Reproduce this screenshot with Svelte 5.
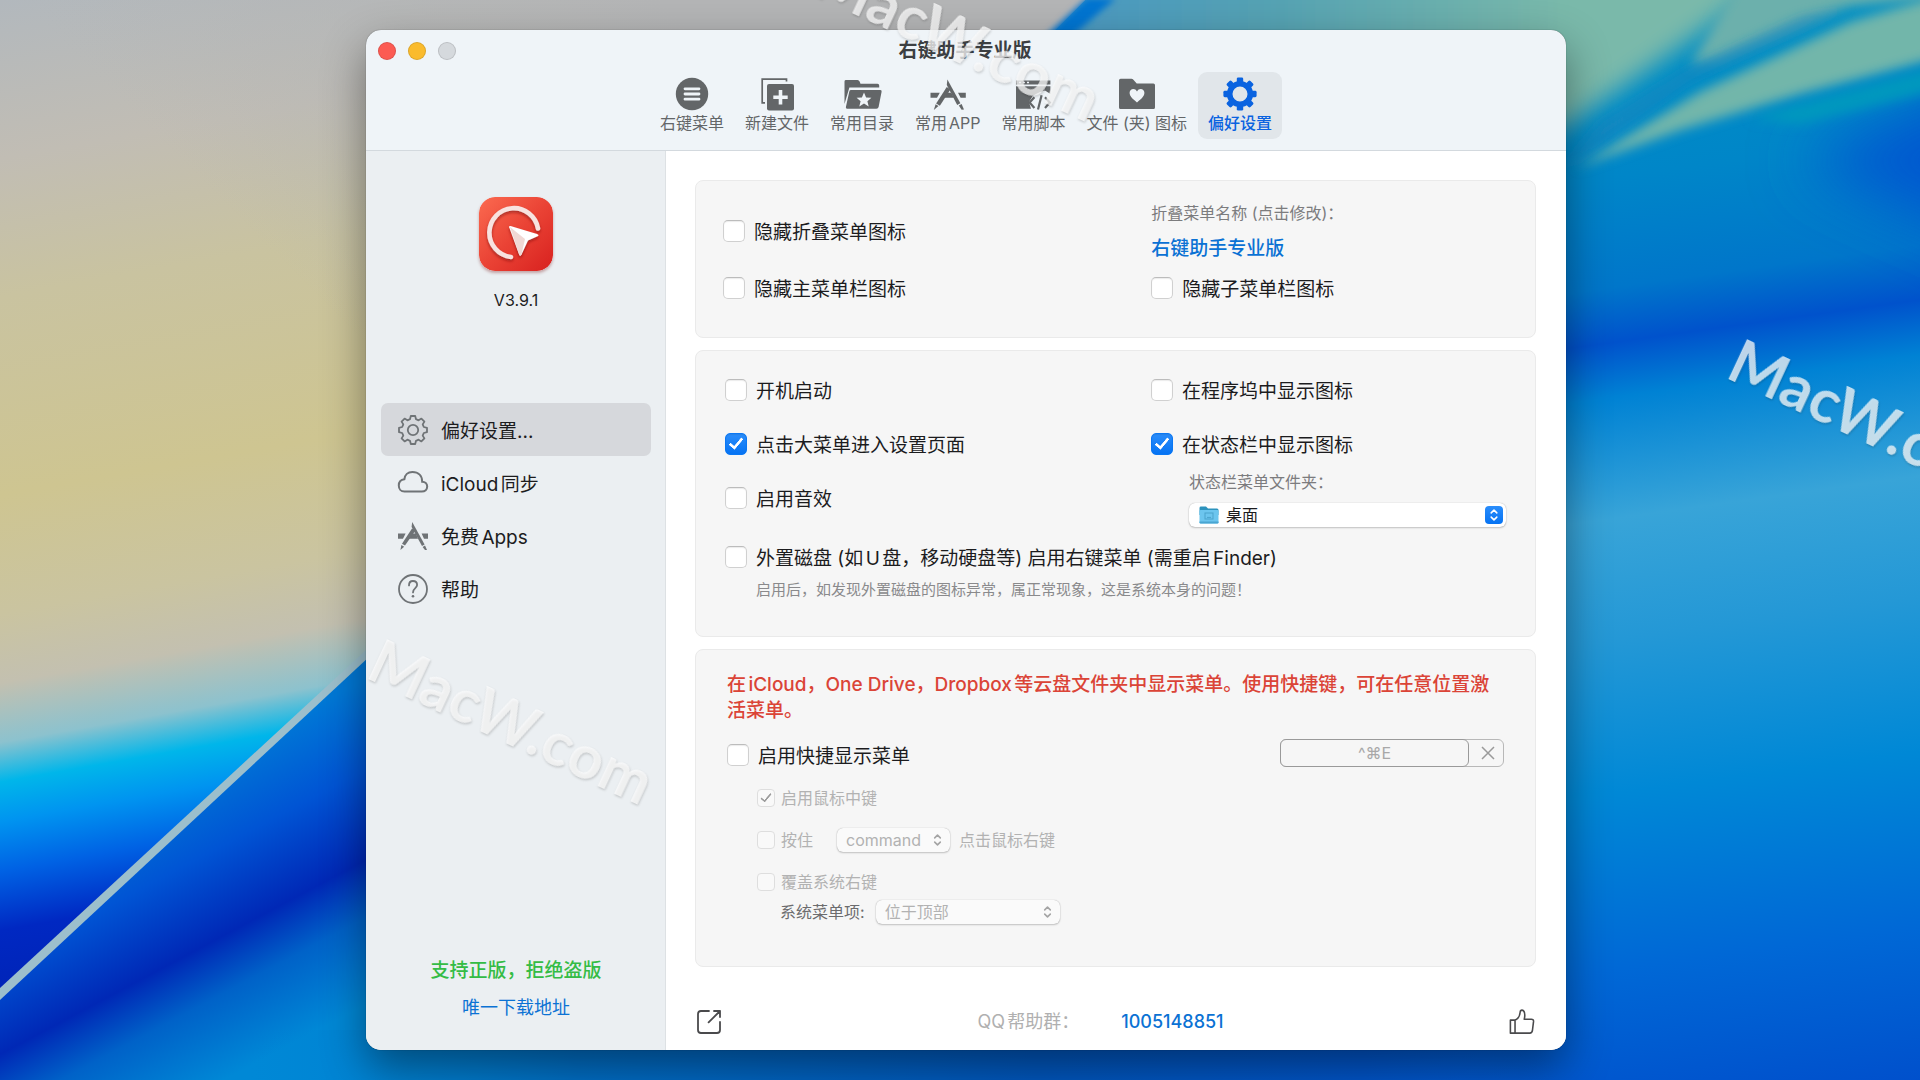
<script lang="ts">
  type Tool = { id: string; label: string };

  const tools: Tool[] = [
    { id: 'menu', label: '右键菜单' },
    { id: 'newfile', label: '新建文件' },
    { id: 'favorites', label: '常用目录' },
    { id: 'apps', label: '常用APP' },
    { id: 'script', label: '常用脚本' },
    { id: 'folder', label: '文件 (夹) 图标' },
    { id: 'gear', label: '偏好设置' }
  ];

  const pages = [
    { id: 'settings', label: '偏好设置...' },
    { id: 'cloud', label: 'iCloud同步' },
    { id: 'free', label: '免费Apps' },
    { id: 'help', label: '帮助' }
  ];

  const teeth = [0, 45, 90, 135, 180, 225, 270, 315];

  let activeTool = $state('gear');
  let activePage = $state('settings');

  let hideFold = $state(false);
  let hideMain = $state(false);
  let hideSub = $state(false);
  let autoStart = $state(false);
  let openSettings = $state(true);
  let sound = $state(false);
  let showDock = $state(false);
  let showStatus = $state(true);
  let external = $state(false);
  let quickMenu = $state(false);
</script>

<svelte:head>
  <title>右键助手专业版</title>
</svelte:head>

{#snippet toolIcon(id: string)}
  <svg class="tool-icon" viewBox="-20 -17 40 34" aria-hidden="true">
    {#if id === 'menu'}
      <circle r="16.2" fill="currentColor" />
      <path d="M-7-5.2H7M-7 0H7M-7 5.2H7" stroke="#eff4f8" stroke-width="2.8" stroke-linecap="round" />
    {:else if id === 'newfile'}
      <path d="M9.5-12.5V-14.8H-14.8V8.8H-12" fill="none" stroke="currentColor" stroke-width="1.7" />
      <rect x="-10" y="-10" width="27" height="26.4" rx="2" fill="currentColor" />
      <path d="M3.5-4V10.4M-3.7 3.2H10.7" stroke="#eff4f8" stroke-width="3.6" />
    {:else if id === 'favorites'}
      <path d="M-17.5-12.6Q-17.5-14-16-14H-4.5Q-3-14-2.4-12.5L-1.5-10.3H15.5Q17.2-10.3 17.2-8.6V-6.4H-12.6L-17.5 10Z" fill="currentColor" />
      <path d="M-11-4H18.4Q20-4 19.6-2.3L16.6 13Q16.2 14.8 14.4 14.8H-14.8Q-16.6 14.8-16.1 13L-12.7-2.6Q-12.4-4-11-4Z" fill="currentColor" />
      <path d="M2-1.6L4.1 3.4L9.4 3.8L5.4 7.2L6.7 12.5L2 9.6L-2.7 12.5L-1.4 7.2L-5.4 3.8L-.1 3.4Z" fill="#eff4f8" />
    {:else if id === 'apps'}
      <path d="M-17.5-1.3H-8.2L-11 3.8H-17.5ZM-3.5-1.3H3.2L6 3.8H-6.3ZM10-1.3H17.8V3.8H12.6Z" fill="currentColor" />
      <path d="M.6-5.8L-10 10.6" stroke="currentColor" stroke-width="4.4" />
      <path d="M-12.4 10.2L-9.5 12L-14.2 16Z" fill="currentColor" />
      <path d="M-.6-14.5L12.4 9.3L9.2 11L-1.2-9Z" fill="currentColor" />
      <path d="M10.8 11.5L13.6 10L16 15.5L13.6 15.8Z" fill="currentColor" />
    {:else if id === 'script'}
      <path d="M-17-13.4H17.4V-9.6H-17ZM-17-7.8H17.4V0L12-3.6L7-2L0 1.6L-4 8L-2 14.8H-17Z" fill="currentColor" />
      <path d="M-14-11.5H-12M-10-11.5H-8M-6-11.5H-4" stroke="#eff4f8" stroke-width="1.6" />
      <path d="M1.4 3.2L-3.4 8.6L1.4 14M12 3.2L16.8 8.6L12 14M8.6 1.2L5 15.4" fill="none" stroke="currentColor" stroke-width="2.2" />
    {:else if id === 'folder'}
      <path d="M-18-13.6Q-18-15.2-16.4-15.2H-5.6Q-4.4-15.2-3.6-14.2L-.3-10.6H16.4Q18-10.6 18-9V13.4Q18 15 16.4 15H-16.4Q-18 15-18 13.4Z" fill="currentColor" />
      <path d="M0 8.4C-4.5 4.8-7.4 2.2-7.4-1.2C-7.4-5.6-1.8-6.6 0-2.6C1.8-6.6 7.4-5.6 7.4-1.2C7.4 2.2 4.5 4.8 0 8.4Z" fill="#eff4f8" />
    {:else}
      <circle r="10.3" fill="none" stroke="currentColor" stroke-width="5.6" />
      {#each teeth as deg}
        <rect x="-3.2" y="-16.6" width="6.4" height="7" rx="1.4" fill="currentColor" transform="rotate({deg})" />
      {/each}
    {/if}
  </svg>
{/snippet}

{#snippet pageIcon(id: string)}
  <svg class="page-icon" viewBox="-16 -16 32 32" fill="none" stroke="currentColor" stroke-width="1.8" aria-hidden="true">
    {#if id === 'settings'}
      <circle r="5.2" />
      <path
        stroke-linejoin="round"
        d="M-2.2-14H2.2L3-10.8L5.6-9.7L8.4-11.4L11.4-8.4L9.7-5.6L10.8-3L14-2.2V2.2L10.8 3L9.7 5.6L11.4 8.4L8.4 11.4L5.6 9.7L3 10.8L2.2 14H-2.2L-3 10.8L-5.6 9.7L-8.4 11.4L-11.4 8.4L-9.7 5.6L-10.8 3L-14 2.2V-2.2L-10.8-3L-9.7-5.6L-11.4-8.4L-8.4-11.4L-5.6-9.7L-3-10.8Z"
      />
    {:else if id === 'cloud'}
      <path stroke-width="2" d="M-8.6 8.6H8.8C12 8.6 14.2 6.5 14.2 3.6C14.2.6 12 -1.3 9.2-1.3C9.2-7 5.6-11-.6-11C-5.2-11-8.2-8-8.6-3.8C-12-3.4-14.2-1-14.2 2.4C-14.2 6-12 8.6-8.6 8.6Z" />
    {:else if id === 'free'}
      <g fill="currentColor" stroke="none">
        <path d="M-15-2.4H-7.4L-10 2.8H-15ZM-3-2.4H2.8L5 2.8H-5.6ZM8.6-2.4H15V2.8H11Z" />
        <path d="M-1-7.6L2.4-5.6L-8 9.6L-11 7.8Z" />
        <path d="M-11.6 9L-8.8 10.8L-12.6 14Z" />
        <path d="M-.8-14L11.6 8.4L9 10L-1.4-9Z" />
        <path d="M9.6 11L12 9.6L14 14L12 14Z" />
      </g>
    {:else}
      <circle r="14" />
      <path d="M-4-3.6C-4-6.4-2.2-8-.1-8C2.3-8 4.1-6.4 4.1-4C4.1-.9 0-.8 0 3.4" stroke-linecap="round" />
      <circle cy="7.2" r="1.3" fill="currentColor" stroke="none" />
    {/if}
  </svg>
{/snippet}

{#snippet chevrons()}
  <svg class="chevrons" viewBox="0 0 12 16" fill="none" stroke="currentColor" stroke-width="1.8" stroke-linecap="round" stroke-linejoin="round" aria-hidden="true">
    <path d="M2.8 5.6L6 2.4L9.2 5.6M2.8 10.4L6 13.6L9.2 10.4" />
  </svg>
{/snippet}

<div class="desktop">
  <svg class="wallpaper" viewBox="0 0 1920 1080" preserveAspectRatio="none" aria-hidden="true">
    <defs>
      <linearGradient id="sand" gradientUnits="userSpaceOnUse" x1="0" y1="0" x2="170" y2="960">
        <stop offset="0" stop-color="#b2b8bd" />
        <stop offset=".16" stop-color="#c1bdb4" />
        <stop offset=".3" stop-color="#c9c3a0" />
        <stop offset=".5" stop-color="#cec591" />
        <stop offset=".62" stop-color="#cac4a0" />
        <stop offset=".69" stop-color="#c3c0b0" />
        <stop offset=".75" stop-color="#8cc2ce" />
        <stop offset=".79" stop-color="#00b6ea" />
        <stop offset=".83" stop-color="#0094f0" />
        <stop offset=".88" stop-color="#0062e4" />
        <stop offset=".94" stop-color="#0028c2" />
        <stop offset="1" stop-color="#0024b8" />
      </linearGradient>
      <linearGradient id="haze" gradientUnits="userSpaceOnUse" x1="340" y1="320" x2="660" y2="0">
        <stop offset="0" stop-color="#b2b5b8" stop-opacity="0" />
        <stop offset="1" stop-color="#b4b5b6" />
      </linearGradient>
      <linearGradient id="under" gradientUnits="userSpaceOnUse" x1="110" y1="815" x2="260" y2="1097">
        <stop offset="0" stop-color="#0078d6" />
        <stop offset=".25" stop-color="#0054d4" />
        <stop offset=".5" stop-color="#0028b6" />
        <stop offset=".66" stop-color="#0062c8" />
        <stop offset=".9" stop-color="#0088d6" />
        <stop offset="1" stop-color="#0088d6" />
      </linearGradient>
      <linearGradient id="floor" gradientUnits="userSpaceOnUse" x1="250" y1="0" x2="1560" y2="0">
        <stop offset="0" stop-color="#0080d0" stop-opacity="0" />
        <stop offset=".25" stop-color="#0070c8" />
        <stop offset=".6" stop-color="#0058c0" />
        <stop offset=".85" stop-color="#0056cc" />
        <stop offset="1" stop-color="#0056d0" stop-opacity="0" />
      </linearGradient>
      <linearGradient id="sea" gradientUnits="userSpaceOnUse" x1="1600" y1="25" x2="1750" y2="1105">
        <stop offset="0" stop-color="#0090c4" />
        <stop offset=".14" stop-color="#0086c8" />
        <stop offset=".24" stop-color="#0076ca" />
        <stop offset=".29" stop-color="#0052cc" />
        <stop offset=".34" stop-color="#0082d4" />
        <stop offset=".45" stop-color="#38a4d8" />
        <stop offset=".56" stop-color="#2498d6" />
        <stop offset=".7" stop-color="#0088d6" />
        <stop offset=".86" stop-color="#0068d6" />
        <stop offset="1" stop-color="#0050cc" />
      </linearGradient>
      <linearGradient id="teal" gradientUnits="userSpaceOnUse" x1="1040" y1="0" x2="1920" y2="0">
        <stop offset="0" stop-color="#4a98c4" />
        <stop offset=".25" stop-color="#54a2b4" />
        <stop offset=".6" stop-color="#7ab9aa" />
        <stop offset="1" stop-color="#7ab9aa" />
      </linearGradient>
      <filter id="wide" x="-50%" y="-50%" width="200%" height="200%"><feGaussianBlur stdDeviation="30" /></filter>
      <filter id="soft" x="-20%" y="-20%" width="140%" height="140%"><feGaussianBlur stdDeviation="12" /></filter>
      <filter id="softer" x="-20%" y="-20%" width="140%" height="140%"><feGaussianBlur stdDeviation="6" /></filter>
      <filter id="edge" x="-20%" y="-20%" width="140%" height="140%"><feGaussianBlur stdDeviation="3" /></filter>
    </defs>
    <rect width="1920" height="1080" fill="url(#sea)" />
    <path d="M1800 160L2000 70V250Q1880 200 1800 160Z" fill="#0058d0" filter="url(#wide)" />
    <path d="M1000-40H1800L1690 40L1560 130L1000 180Z" fill="url(#teal)" filter="url(#soft)" />
    <path d="M1575 168L1700 92L1850 22L1990 -20V44L1800 94L1680 130Z" fill="#72b6aa" filter="url(#softer)" />
    <path d="M1740-20L1960-40V-6L1850 6L1720 60L1690 66Z" fill="#6cb0ac" filter="url(#softer)" />
    <path d="M1560 172L1690 80L1850 6L1800 18L1690 68L1600 124Z" fill="#1c88be" opacity=".7" filter="url(#softer)" />
    <path d="M1750 118L1960 60V84L1800 124Z" fill="#0098be" filter="url(#softer)" />
    <path d="M0 0H1085L1025 60L366 655L0 992Z" fill="url(#sand)" />
    <path d="M0 0H1085L1025 60L700 340H0Z" fill="url(#haze)" />
    <path d="M1087 -2L1030 50H1056L1116 -2Z" fill="#0074d2" filter="url(#edge)" />
    <path d="M0 992L366 655L900 655L1300 1080H0Z" fill="url(#under)" />
    <rect x="250" y="1030" width="1310" height="50" fill="url(#floor)" />
    <path d="M0 988L366 650L370 656L0 1000Z" fill="#9cbfcc" />
  </svg>

  <main class="window">
    <header class="titlebar">
      <div class="lights">
        <button class="light close" aria-label="关闭"></button>
        <button class="light minimize" aria-label="最小化"></button>
        <button class="light zoom" aria-label="缩放" disabled></button>
      </div>
      <h1>右键助手专业版</h1>
    </header>

    <nav class="toolbar">
      {#each tools as tool}
        <button class="tool" class:active={activeTool === tool.id} onclick={() => (activeTool = tool.id)}>
          {@render toolIcon(tool.id)}
          <span>{tool.label}</span>
        </button>
      {/each}
    </nav>

    <div class="body">
      <aside class="sidebar">
        <svg class="logo" viewBox="0 0 74 74" aria-hidden="true">
          <defs>
            <linearGradient id="logo-bg" x1="0" y1="0" x2="1" y2="1">
              <stop offset="0" stop-color="#fb6a50" />
              <stop offset=".5" stop-color="#ea4335" />
              <stop offset="1" stop-color="#d8211f" />
            </linearGradient>
            <filter id="logo-shadow" x="-30%" y="-30%" width="160%" height="160%">
              <feDropShadow dx="0" dy="2" stdDeviation="1.6" flood-color="#7c0d0d" flood-opacity=".6" />
            </filter>
          </defs>
          <rect width="74" height="74" rx="16" fill="url(#logo-bg)" />
          <g filter="url(#logo-shadow)">
            <path d="M59 31.5A24.5 24.5 0 1 0 32 60" fill="none" stroke="#f8e2df" stroke-width="4.6" stroke-linecap="round" />
            <path d="M30.5 31Q29 29 31.5 29L58 37Q61 38.4 58 39.6L49 43.6L42.5 57.5Q41 60 40 57Z" fill="#fff" />
            <path d="M31 30L46 42L42.5 57.5Q41 60 40 57Z" fill="#f0d8d4" />
          </g>
        </svg>
        <p class="version">V3.9.1</p>

        <nav class="pages">
          {#each pages as page}
            <button class="page" class:active={activePage === page.id} onclick={() => (activePage = page.id)}>
              {@render pageIcon(page.id)}
              <span>{page.label}</span>
            </button>
          {/each}
        </nav>

        <div class="legal">
          <p>支持正版，拒绝盗版</p>
          <a href="#download">唯一下载地址</a>
        </div>
      </aside>

      <section class="content">
        <div class="panel fold">
          <div class="col left">
            <label class="check"><input type="checkbox" bind:checked={hideFold} />隐藏折叠菜单图标</label>
            <label class="check"><input type="checkbox" bind:checked={hideMain} />隐藏主菜单栏图标</label>
          </div>
          <div class="col right">
            <p class="hint">折叠菜单名称 (点击修改)：</p>
            <button class="rename">右键助手专业版</button>
            <label class="check"><input type="checkbox" bind:checked={hideSub} />隐藏子菜单栏图标</label>
          </div>
        </div>

        <div class="panel general">
          <div class="cols">
            <div class="col">
              <label class="check"><input type="checkbox" bind:checked={autoStart} />开机启动</label>
              <label class="check"><input type="checkbox" bind:checked={openSettings} />点击大菜单进入设置页面</label>
              <label class="check"><input type="checkbox" bind:checked={sound} />启用音效</label>
            </div>
            <div class="col">
              <label class="check"><input type="checkbox" bind:checked={showDock} />在程序坞中显示图标</label>
              <label class="check"><input type="checkbox" bind:checked={showStatus} />在状态栏中显示图标</label>
              <div class="status">
                <label class="hint" for="status-folder">状态栏菜单文件夹：</label>
                <div class="popup blue">
                  <svg class="folder" viewBox="0 0 20 18" aria-hidden="true">
                    <path d="M.5 2Q.5.6 2 .6H7L9 2.4H18Q19.5 2.4 19.5 4V9H.5Z" fill="#2d93bd" />
                    <rect x=".5" y="4" width="19" height="13.4" rx="1.2" fill="#6cc5ee" />
                    <path d="M.5 15.4H19.5V16.2Q19.5 17.4 18.3 17.4H1.7Q.5 17.4.5 16.2Z" fill="#4aa6d2" />
                    <rect x="6" y="7" width="8" height="6" fill="none" stroke="#4aa3cc" />
                    <path d="M8 11.4H12" stroke="#4aa3cc" />
                  </svg>
                  <select id="status-folder">
                    <option>桌面</option>
                  </select>
                  {@render chevrons()}
                </div>
              </div>
            </div>
          </div>
          <label class="check"><input type="checkbox" bind:checked={external} />外置磁盘 (如U盘，移动硬盘等) 启用右键菜单 (需重启Finder)</label>
          <p class="note">启用后，如发现外置磁盘的图标异常，属正常现象，这是系统本身的问题！</p>
        </div>

        <div class="panel quick">
          <p class="warning">在iCloud，One Drive，Dropbox等云盘文件夹中显示菜单。使用快捷键，可在任意位置激活菜单。</p>
          <div class="quick-row">
            <label class="check"><input type="checkbox" bind:checked={quickMenu} />启用快捷显示菜单</label>
            <div class="shortcut">
              <input type="text" value="^⌘E" aria-label="快捷键" disabled />
              <button aria-label="清除快捷键" disabled>
                <svg viewBox="0 0 14 14" aria-hidden="true"><path d="M1 1L13 13M13 1L1 13" stroke="currentColor" stroke-width="1.5" /></svg>
              </button>
            </div>
          </div>
          <div class="sub">
            <label class="check small"><input type="checkbox" checked disabled />启用鼠标中键</label>
            <div class="line">
              <label class="check small"><input type="checkbox" disabled />按住</label>
              <div class="popup key">
                <select aria-label="修饰键" disabled>
                  <option>command</option>
                </select>
                {@render chevrons()}
              </div>
              <span>点击鼠标右键</span>
            </div>
            <label class="check small"><input type="checkbox" disabled />覆盖系统右键</label>
            <div class="line place">
              <label for="system-items">系统菜单项:</label>
              <div class="popup top">
                <select id="system-items" disabled>
                  <option>位于顶部</option>
                </select>
                {@render chevrons()}
              </div>
            </div>
          </div>
        </div>

        <footer>
          <button class="foot-icon" aria-label="分享">
            <svg viewBox="0 0 26 26" fill="none" stroke="currentColor" stroke-width="1.8" stroke-linecap="round" stroke-linejoin="round">
              <path d="M13 2H5Q2 2 2 5V21Q2 24 5 24H21Q24 24 24 21V13" />
              <path d="M18 2H24V8M24 2L12.6 13.4" />
            </svg>
          </button>
          <p class="group">QQ帮助群：<a href="#qq">1005148851</a></p>
          <button class="foot-icon" aria-label="点赞">
            <svg viewBox="0 0 28 28" fill="none" stroke="currentColor" stroke-width="1.7" stroke-linejoin="round">
              <path d="M1.5 12H6.5V26H1.5ZM6.5 12Q11.5 10 12 3.5Q12.2 1.2 14 1.2Q17 1.6 17 6.5Q17 9 16.4 11H24Q26.6 11 26.4 13.6L25.2 23.4Q24.8 26 22.4 26H6.5" />
            </svg>
          </button>
        </footer>
      </section>
    </div>
  </main>

  <svg class="marks" viewBox="0 0 1920 1080" preserveAspectRatio="xMidYMin slice" aria-hidden="true">
    <text transform="translate(811 -6) rotate(25)">MacW.com</text>
    <text transform="translate(364 677) rotate(25)">MacW.com</text>
    <text transform="translate(1724 377) rotate(25)">MacW.com</text>
  </svg>
</div>

<style>
  :global(body) {
    margin: 0;
    background: #0068c8;
  }

  .desktop {
    position: relative;
    display: grid;
    grid-template-columns: 61fr 200fr 59fr;
    min-height: 100vh;
    padding: 30px 0;
    box-sizing: border-box;
    overflow: hidden;
    font-family: Inter, 'Noto Sans CJK SC', sans-serif;
    color: #1c1c1e;
    text-autospace: normal;
  }

  .wallpaper,
  .marks {
    position: absolute;
    inset: 0;
    width: 100%;
    height: 100%;
  }

  .marks {
    pointer-events: none;
  }

  .marks text {
    font-family: Lato, sans-serif;
    font-size: 61px;
    font-weight: 700;
    fill: #fff;
    fill-opacity: 0.74;
    filter: drop-shadow(1px 1px 1px rgba(0, 0, 0, 0.25));
  }

  button {
    padding: 0;
    border: 0;
    background: none;
    font: inherit;
    color: inherit;
  }

  p,
  h1 {
    margin: 0;
  }

  a {
    color: #0b72d4;
    text-decoration: none;
  }

  .window {
    position: relative;
    grid-column: 2;
    display: flex;
    flex-direction: column;
    min-width: 0;
    border-radius: 15px;
    background: #eff4f8;
    box-shadow: 0 0 1px rgba(0, 0, 0, 0.6), 0 18px 44px rgba(0, 0, 0, 0.42);
    overflow: hidden;
  }

  .titlebar {
    display: grid;
    grid-template-columns: 1fr auto 1fr;
    align-items: center;
    height: 42px;
    padding: 0 14px 0 12px;
  }

  .titlebar h1 {
    font-size: 19px;
    line-height: 26px;
    font-weight: 700;
    color: #3c3f42;
  }

  .lights {
    display: flex;
    gap: 12px;
  }

  .light {
    width: 18px;
    height: 18px;
    border-radius: 50%;
    border: 1px solid rgba(0, 0, 0, 0.12);
  }

  .close {
    background: #fc5b53;
  }

  .minimize {
    background: #fabb2d;
  }

  .zoom {
    background: #d5d9dd;
  }

  .toolbar {
    display: flex;
    justify-content: center;
    gap: 1px;
    padding-bottom: 11px;
    border-bottom: 1px solid #d3d9de;
  }

  .tool {
    display: flex;
    flex-direction: column;
    align-items: center;
    gap: 1px;
    padding: 5px 10px;
    border-radius: 9px;
    font-size: 16px;
    line-height: 22px;
    white-space: nowrap;
    color: #636668;
  }

  .tool.active {
    background: #e1e6ea;
    color: #0a63e0;
    font-weight: 500;
  }

  .tool-icon {
    width: 40px;
    height: 34px;
  }

  .body {
    flex: 1;
    display: flex;
  }

  .sidebar {
    flex: 0 0 25%;
    display: flex;
    flex-direction: column;
    align-items: center;
    padding: 46px 14px 29px 15px;
    box-sizing: border-box;
    background: #ebeff2;
    border-right: 1px solid #dde1e4;
  }

  .logo {
    width: 74px;
    height: 74px;
    border-radius: 16px;
    box-shadow: 0 2px 3px rgba(120, 20, 20, 0.35);
  }

  .version {
    margin-top: 18px;
    font-size: 16px;
    line-height: 22px;
  }

  .pages {
    align-self: stretch;
    margin-top: 92px;
  }

  .page {
    display: flex;
    align-items: center;
    gap: 12px;
    width: 100%;
    height: 53px;
    padding: 0 16px;
    border-radius: 7px;
    font-size: 19px;
    line-height: 26px;
  }

  .page span {
    padding-top: 4px;
  }

  .page.active {
    background: #d6d8dc;
  }

  .page-icon {
    width: 32px;
    height: 32px;
    color: #6f7376;
  }

  .legal {
    display: flex;
    flex-direction: column;
    align-items: center;
    gap: 11px;
    margin-top: auto;
    font-size: 19px;
    line-height: 26px;
  }

  .legal p {
    color: #34bc45;
    font-weight: 500;
  }

  .legal a {
    font-size: 18px;
  }

  .content {
    flex: 1;
    display: flex;
    flex-direction: column;
    gap: 12px;
    padding: 29px 30px 15px 29px;
    background: #fff;
  }

  .panel {
    border: 1px solid #eaeaea;
    border-radius: 8px;
    background: #f6f6f6;
  }

  .fold,
  .cols {
    display: grid;
    grid-template-columns: 6fr 5fr;
  }

  .fold {
    padding: 22px 27px 33px;
  }

  .fold .left {
    padding-top: 16px;
    gap: 29px;
  }

  .fold .right {
    gap: 0;
  }

  .fold .right .hint {
    margin-bottom: 13px;
  }

  .rename {
    margin-bottom: 14px;
    font-size: 19px;
    line-height: 26px;
    font-weight: 500;
    color: #0b72d4;
  }

  .col {
    display: flex;
    flex-direction: column;
    align-items: flex-start;
    gap: 26px;
  }

  .check {
    display: flex;
    align-items: center;
    gap: 9px;
    font-size: 19px;
    line-height: 28px;
  }

  .check input {
    appearance: none;
    position: relative;
    flex: none;
    width: 22px;
    height: 22px;
    margin: 0 0 5px;
    border: 1px solid #d0d0d0;
    border-top-color: #bcbcbc;
    border-radius: 5px;
    background: #fff;
    box-shadow: inset 0 1px 1px rgba(0, 0, 0, 0.08);
  }

  .check input:checked {
    border-color: #0a78f5;
    background: linear-gradient(#2a8dfb, #0673f3);
  }

  .check input:checked::after {
    content: '';
    position: absolute;
    left: 6px;
    top: 1px;
    width: 5px;
    height: 11px;
    border: solid #fff;
    border-width: 0 3px 3px 0;
    border-radius: 1px;
    transform: rotate(40deg);
  }

  .hint {
    font-size: 16px;
    line-height: 20px;
    color: #7c7c7e;
  }

  .general {
    padding: 27px 29px 36px;
  }

  .cols {
    margin-bottom: 18px;
  }

  .status {
    display: flex;
    flex-direction: column;
    align-self: stretch;
    gap: 11px;
    margin-top: -14px;
    padding-left: 38px;
  }

  .popup {
    position: relative;
    border-radius: 6px;
    background: #fff;
    box-shadow: 0 0 1px rgba(0, 0, 0, 0.3), 0 1px 2px rgba(0, 0, 0, 0.2);
  }

  .popup select {
    display: block;
    appearance: none;
    width: 100%;
    height: 24px;
    padding: 0 9px;
    border: 0;
    background: none;
    font: inherit;
    font-size: 16px;
    color: #1c1c1e;
  }

  .popup select:disabled {
    color: #b2b2b2;
    opacity: 1;
  }

  .popup.blue select {
    padding-left: 37px;
  }

  .folder {
    position: absolute;
    left: 10px;
    top: 3px;
    width: 20px;
    height: 18px;
  }

  .chevrons {
    position: absolute;
    right: 7px;
    top: 5px;
    width: 11px;
    height: 14px;
    color: #a4a4a4;
    pointer-events: none;
  }

  .blue .chevrons {
    right: 3px;
    top: 3px;
    width: 18px;
    height: 18px;
    padding: 2px 0;
    box-sizing: border-box;
    border-radius: 4px;
    background: linear-gradient(#2a8dfb, #0673f3);
    color: #fff;
  }

  .note {
    margin-top: 7px;
    padding-left: 31px;
    font-size: 15px;
    line-height: 20px;
    color: #8a8a8c;
  }

  .quick {
    padding: 22px 31px 42px;
  }

  .warning {
    font-size: 19px;
    line-height: 26px;
    font-weight: 500;
    color: #db4437;
  }

  .quick-row {
    display: flex;
    justify-content: space-between;
    align-items: flex-start;
    padding-top: 15px;
  }

  .quick-row .check {
    padding-top: 4px;
  }

  .shortcut {
    display: flex;
    width: 224px;
    height: 28px;
    box-sizing: border-box;
    border: 1px solid #b8b8b8;
    border-radius: 6px;
  }

  .shortcut input {
    flex: 1;
    min-width: 0;
    margin: -1px 0 -1px -1px;
    padding: 0;
    border: 1px solid #9a9a9a;
    border-radius: 6px;
    background: #f6f6f6;
    font: inherit;
    font-size: 16px;
    text-align: center;
    color: #a8a8a8;
  }

  .shortcut button {
    display: grid;
    place-items: center;
    width: 34px;
    padding-left: 4px;
    box-sizing: border-box;
    color: #9a9a9a;
  }

  .shortcut svg {
    width: 14px;
    height: 14px;
  }

  .sub {
    display: flex;
    flex-direction: column;
    gap: 18px;
    padding: 15px 0 0 30px;
    font-size: 16px;
    line-height: 24px;
    color: #b2b2b2;
  }

  .check.small {
    gap: 6px;
    font-size: 16px;
    line-height: 24px;
  }

  .small input {
    width: 18px;
    height: 18px;
    margin-bottom: 1px;
    border-color: #dedede;
    border-radius: 4px;
    background: #f9f9f9;
    box-shadow: none;
  }

  .small input:checked {
    border-color: #dedede;
    background: #f9f9f9;
  }

  .small input:checked::after {
    left: 5px;
    width: 4px;
    height: 9px;
    border-color: #9c9c9c;
    border-width: 0 2px 2px 0;
  }

  .line {
    display: flex;
    align-items: center;
    gap: 9px;
  }

  .line .popup {
    background: #fafafa;
  }

  .key {
    width: 113px;
    margin-left: 15px;
  }

  .place {
    gap: 11px;
    margin-top: -12px;
    padding-left: 23px;
    color: #6c6c6e;
  }

  .top {
    width: 184px;
  }

  footer {
    display: grid;
    grid-template-columns: 1fr auto 1fr;
    align-items: center;
    margin-top: auto;
    font-size: 18px;
    line-height: 26px;
  }

  .foot-icon {
    width: 28px;
    height: 26px;
    color: #4a4a4c;
  }

  .foot-icon svg {
    display: block;
    height: 26px;
    margin: 0 auto;
  }

  .foot-icon:last-child {
    justify-self: end;
  }

  .group {
    margin-right: 30px;
    color: #b0b0b0;
  }

  .group a {
    margin-left: 42px;
    font-weight: 500;
  }
</style>
